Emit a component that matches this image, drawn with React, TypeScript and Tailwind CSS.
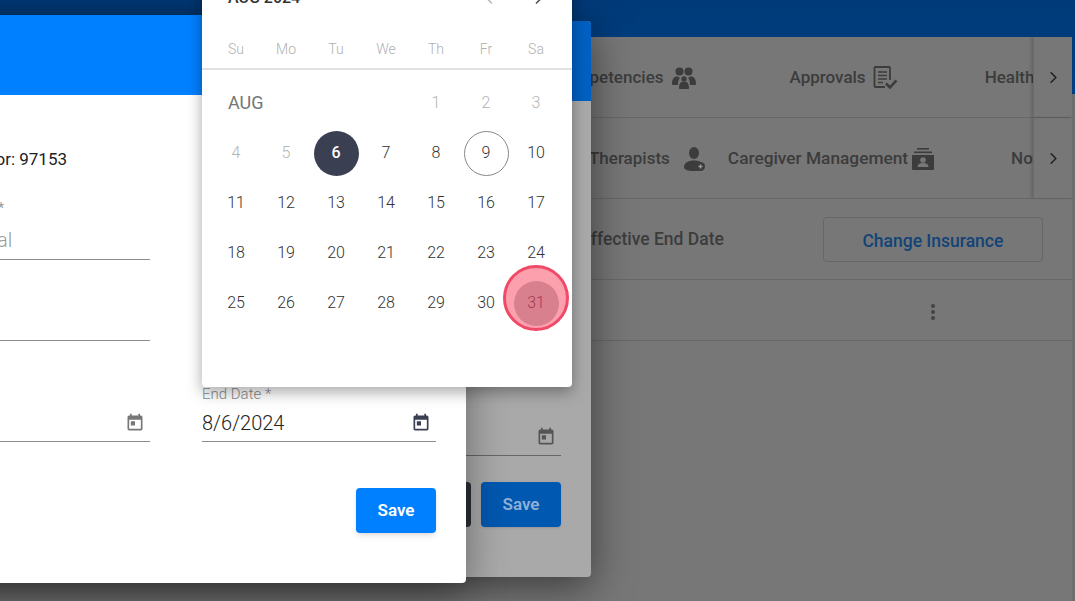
import { ChevronDown, ChevronLeft, ChevronRight } from 'lucide-react';

const TodayIcon = ({ className }: { className: string }) => (
  <svg viewBox="0 0 24 24" fill="currentColor" className={className}>
    <path d="M19 3h-1V1h-2v2H8V1H6v2H5c-1.11 0-1.99.9-1.99 2L3 19c0 1.1.89 2 2 2h14c1.1 0 2-.9 2-2V5c0-1.1-.9-2-2-2zm0 16H5V8h14v11zM7 10h5v5H7z" />
  </svg>
);

const GroupIcon = () => (
  <svg viewBox="0 0 24 22" fill="#3c3c3c" className="w-6 h-[22px]">
    <circle cx="7.500" cy="4.500" r="4" />
    <circle cx="16.500" cy="4.500" r="4" />
    <path d="M0 17c0-5 2-7.500 5-7.800 1 .8 2 1.200 3 1.300C7 12 6 14 6 18H1c-.6 0-1-.4-1-1zM24 17c0-5-2-7.500-5-7.800-1 .8-2 1.200-3 1.300 1 1.500 2 3.500 2 7.500h5c.6 0 1-.4 1-1z" />
    <circle cx="12" cy="12" r="2.700" />
    <path d="M7 21c0-4 1.500-6 3-6.300.7.500 3.300.500 4 0 1.500.3 3 2.300 3 6.300 0 .6-.4 1-1 1H8c-.6 0-1-.4-1-1z" />
  </svg>
);

const ApprovalIcon = () => (
  <svg viewBox="0 0 24 24" fill="none" stroke="#3c3c3c" className="w-6 h-6">
    <path d="M12 21H2.500a1 1 0 0 1-1-1V2a1 1 0 0 1 1-1H16a1 1 0 0 1 1 1v12" strokeWidth="1.800" />
    <path d="M5 6h9M5 9.500h9M5 13h9M5 16.500h5" strokeWidth="1.600" />
    <path d="M13 17.500l4 4 6.500-7" strokeWidth="2.600" />
  </svg>
);

const TherapistIcon = () => (
  <svg viewBox="0 0 22 24" className="w-[22px] h-6">
    <ellipse cx="10" cy="6" rx="5" ry="6" fill="#3c3c3c" />
    <path d="M0 20c0-4 4-6.500 10-6.500s10 2.500 10 6.500c0 2.500-3 4-10 4S0 22.500 0 20z" fill="#3c3c3c" />
    <circle cx="16.500" cy="19.500" r="4.500" fill="#3c3c3c" />
    <path d="M16.500 17.500v4M14.500 19.500h4" stroke="#9a9a9a" strokeWidth="1.300" />
  </svg>
);

const CaregiverIcon = () => (
  <svg viewBox="0 0 24 24" fill="#3c3c3c" className="w-6 h-6">
    <rect x="6" y="1" width="12" height="1.600" />
    <rect x="3" y="4.500" width="18" height="1.600" />
    <path d="M1 8h22v14a1 1 0 0 1-1 1H2a1 1 0 0 1-1-1z" />
    <circle cx="12" cy="13" r="2.800" fill="#777777" />
    <path d="M6.500 20c0-3 2.500-4 5.500-4s5.500 1 5.500 4z" fill="#777777" />
  </svg>
);

const ScrollButton = () => (
  <div className="w-[39px] shrink-0 flex items-center justify-center border-l border-[#6a6a6a] shadow-[-2px_0_3px_rgba(0,0,0,0.15)]">
    <ChevronRight className="w-[19px] h-[19px] text-[#222]" strokeWidth={2} />
  </div>
);

const DateField = ({ dark, label, value }: { dark?: boolean; label?: string; value?: string }) => (
  <div className="w-[234px] h-[57px] border-b border-[#8c8c8c] flex flex-col justify-end pb-[6px]">
    {label && <div className="text-[15px] leading-4 font-light text-[#8a8a8a] mb-[9px]">{label}</div>}
    <div className="flex items-center justify-between pr-[5px] h-6">
      <span className="text-[20px] leading-6 font-light text-[#222]">{value}</span>
      <TodayIcon className={`w-5 h-5 ${dark ? 'text-[#3a3f51]' : 'text-[#777]'}`} />
    </div>
  </div>
);

const days = [
  [4, 5, 6, 7, 8, 9, 10],
  [11, 12, 13, 14, 15, 16, 17],
  [18, 19, 20, 21, 22, 23, 24],
  [25, 26, 27, 28, 29, 30, 31],
];

const DayCell = ({ day }: { day: number }) => {
  if (day === 6) {
    return (
      <div className="h-[50px] flex items-center justify-center">
        <span className="w-[45px] h-[45px] rounded-full bg-[#3a3f51] text-white font-medium flex items-center justify-center">6</span>
      </div>
    );
  }
  if (day === 9) {
    return (
      <div className="h-[50px] flex items-center justify-center">
        <span className="w-[45px] h-[45px] rounded-full border border-[#888] text-[#333] font-light flex items-center justify-center">9</span>
      </div>
    );
  }
  if (day === 31) {
    return (
      <div className="relative h-[50px] flex items-center justify-center">
        <span className="absolute left-[-8px] top-[-13px] w-[66px] h-[66px] rounded-full bg-[#fca0ae] border-[3px] border-[#ef4a68]" />
        <span className="relative w-[45px] h-[45px] rounded-full bg-[#d9808f] text-[#a83c55] font-light flex items-center justify-center">31</span>
      </div>
    );
  }
  return (
    <div className={`h-[50px] flex items-center justify-center font-light ${day < 6 ? 'text-[#b5b5b5]' : 'text-[#333]'}`}>
      {day}
    </div>
  );
};

const Calendar = () => (
  <div className="absolute left-[202px] top-[-26px] w-[370px] h-[413px] bg-white rounded shadow-[0_5px_15px_rgba(0,0,0,0.35)]">
    <div className="h-[47px] pl-[26px] pr-[23px] flex items-center justify-between">
      <div className="flex items-center gap-2 text-base font-medium text-[#333]">
        AUG 2024
        <ChevronDown className="w-3 h-3 text-[#bbb]" />
      </div>
      <div className="flex items-center gap-[30px]">
        <ChevronLeft className="w-5 h-5 text-[#bbb]" />
        <ChevronRight className="w-5 h-5 text-[#555]" />
      </div>
    </div>
    <div className="h-[49px] border-b-2 border-[#e2e2e2] pl-[9px] pr-[11px] grid grid-cols-7 items-center text-sm font-light text-[#b0b0b0] text-center pt-[8px]">
      {['Su', 'Mo', 'Tu', 'We', 'Th', 'Fr', 'Sa'].map((d) => (
        <span key={d}>{d}</span>
      ))}
    </div>
    <div className="pt-[8px] pl-[9px] pr-[11px] grid grid-cols-7 text-base">
      <div className="col-span-4 h-[50px] pl-[17px] flex items-center text-lg font-normal text-[#757575]">AUG</div>
      {[1, 2, 3].map((d) => (
        <DayCell key={d} day={d} />
      ))}
      {days.flat().map((d) => (
        <DayCell key={d} day={d} />
      ))}
    </div>
  </div>
);

export default function App() {
  return (
    <div className="relative w-[1075px] h-[601px] overflow-hidden pt-[37px] font-['Roboto',sans-serif] bg-[linear-gradient(#003a78_0,#003f84_94px,#6e6e6e_94px)]">
      <div className="mr-[3px] h-[564px] bg-[#777] text-[17px] font-medium text-[#3c3c3c]">
        <div className="h-[81px] flex border-b border-[#686868]">
          <div className="flex-1 overflow-hidden flex items-center pt-[2px] pl-[554px] whitespace-nowrap">
            <span>Competencies</span>
            <span className="ml-2"><GroupIcon /></span>
            <span className="ml-[94px]">Approvals</span>
            <span className="ml-[7px]"><ApprovalIcon /></span>
            <span className="ml-[88px]">Healthcare</span>
          </div>
          <ScrollButton />
        </div>
        <div className="h-[81px] flex border-b border-[#686868]">
          <div className="flex-1 overflow-hidden flex items-center pt-[2px] pl-[589px] whitespace-nowrap">
            <span>Therapists</span>
            <span className="ml-[14px]"><TherapistIcon /></span>
            <span className="ml-[22px] text-[17.3px]">Caregiver Management</span>
            <span className="ml-[3px]"><CaregiverIcon /></span>
            <span className="ml-[76px]">Notes</span>
          </div>
          <ScrollButton />
        </div>
        <div className="h-[81px] flex items-center border-b border-[#686868] pl-[581px]">
          <span className="pt-[1px] text-[17.5px]">Effective End Date</span>
          <button className="ml-[99px] w-[220px] h-[45px] pt-[4px] rounded border border-[#666] text-[17.5px] text-[#124478]">Change Insurance</button>
        </div>
        <div className="h-[61px] flex items-center justify-center border-b border-[#686868] pl-[794px]">
          <div className="flex flex-col gap-[2px] mt-[4px]">
            <span className="w-1 h-1 rounded-full bg-[#444]" />
            <span className="w-1 h-1 rounded-full bg-[#444]" />
            <span className="w-1 h-1 rounded-full bg-[#444]" />
          </div>
        </div>
      </div>

      {/* dialog behind */}
      <div className="absolute left-[-108px] top-[21px] w-[699px] h-[556px] rounded bg-[#a9a9a9] shadow-[0_10px_40px_rgba(0,0,0,0.5)] overflow-hidden">
        <div className="h-[80px] bg-[#0060c2]" />
        <div className="flex justify-end pt-[299px] pr-[30px]">
          <div className="w-[234px] h-[56px] border-b border-[#666] flex items-end justify-end pr-[5px] pb-[8px]">
            <TodayIcon className="w-5 h-5 text-[#555]" />
          </div>
        </div>
        <div className="flex justify-end gap-[10px] pt-[26px] pr-[30px]">
          <div className="w-[80px] h-[45px] rounded bg-[#2b2f38]" />
          <div className="w-[80px] h-[45px] rounded bg-[#0058b0] shadow text-[17px] text-[#8fb0d5] font-semibold flex items-center justify-center">Save</div>
        </div>
      </div>

      {/* dialog in front */}
      <div className="absolute left-[-114px] top-[15px] w-[580px] h-[568px] rounded bg-white shadow-[0_10px_40px_rgba(0,0,0,0.4)] overflow-hidden">
        <div className="h-[80px] bg-[#0080ff]" />
        <div className="px-[30px]">
          <div className="pt-[54px] pl-[29px] text-[17px] leading-5 text-[#222] whitespace-nowrap">Behavior: 97153</div>
          <div className="w-[234px] h-[91px] border-b border-[#8c8c8c] flex flex-col justify-end pb-[7px]">
            <div className="text-sm leading-4 text-[#9a9a9a] mb-[12px]">Service Type *</div>
            <div className="text-[20px] leading-6 font-light text-[#9a9a9a]">Residential</div>
          </div>
          <div className="w-[234px] h-[81px] border-b border-[#8c8c8c]" />
          <div className="flex gap-[52px] pt-[44px]">
            <DateField />
            <DateField dark label="End Date *" value="8/6/2024" />
          </div>
          <div className="flex justify-end pt-[46px]">
            <button className="w-[80px] h-[45px] rounded bg-[#0080ff] text-white text-[17px] font-semibold shadow-md">Save</button>
          </div>
        </div>
      </div>

      <Calendar />
    </div>
  );
}
